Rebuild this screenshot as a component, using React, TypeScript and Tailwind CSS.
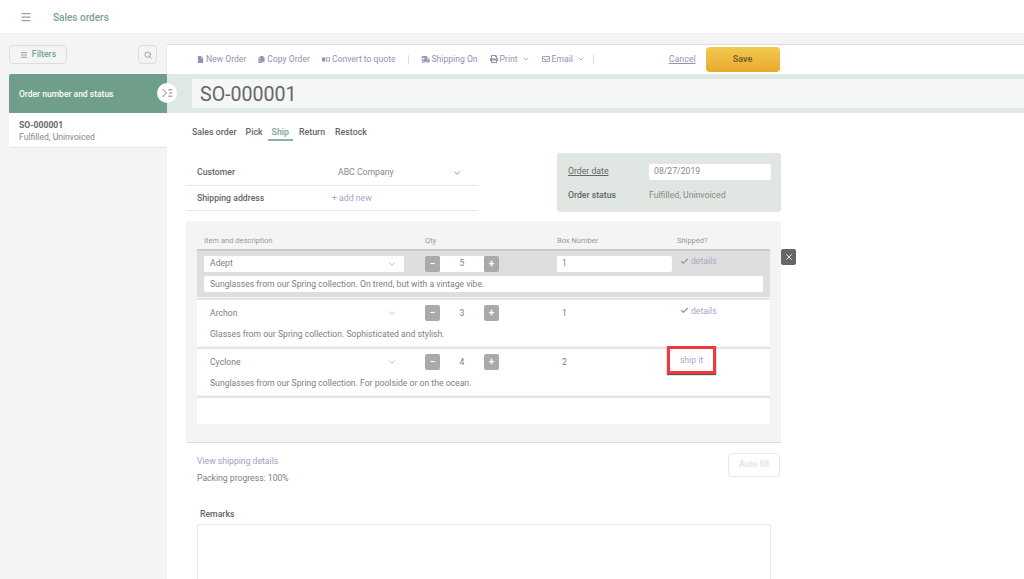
import { Check, ChevronDown, Menu, Search, X } from 'lucide-react';
import { FaCopy, FaFile, FaPrint, FaRegEnvelope, FaShippingFast } from 'react-icons/fa';

const ITEMS = [
  { name: 'Adept', qty: '5', box: '1', desc: 'Sunglasses from our Spring collection. On trend, but with a vintage vibe.', shipped: true, active: true },
  { name: 'Archon', qty: '3', box: '1', desc: 'Glasses from our Spring collection. Sophisticated and stylish.', shipped: true, active: false },
  { name: 'Cyclone', qty: '4', box: '2', desc: 'Sunglasses from our Spring collection. For poolside or on the ocean.', shipped: false, active: false },
];

function ToolButton({ icon, label, caret }: { icon: React.ReactNode; label: string; caret?: boolean }) {
  return (
    <span className="flex items-center gap-[2px] text-[#8f93ad]">
      {icon}
      <span className="text-[8.6px]">{label}</span>
      {caret && <ChevronDown className="ml-[2px] h-[8px] w-[8px]" />}
    </span>
  );
}

function QtyButton({ label }: { label: string }) {
  return (
    <span className="flex h-[16px] w-[15px] shrink-0 items-center justify-center rounded-[2px] bg-[#aaaaaa] text-[10px] font-bold leading-none text-white">
      {label}
    </span>
  );
}

function ItemRow({ item }: { item: (typeof ITEMS)[number] }) {
  return (
    <div className={`relative h-[48px] border-t-2 pl-[7px] ${item.active ? 'border-[#c9c9c9] bg-[#dedede]' : 'border-[#e4e4e4] bg-white'}`}>
      <div className={`flex items-center text-[8.65px] text-[#808080] ${item.active ? 'h-[25px]' : 'h-[26px]'}`}>
        <div className={`flex h-[16px] w-[200px] items-center justify-between rounded-[2px] pl-[6px] pr-[7px] ${item.active ? 'bg-white' : ''}`}>
          <span>{item.name}</span>
          <ChevronDown className="h-[10px] w-[10px] text-[#999]" strokeWidth={1.5} />
        </div>
        <div className="ml-[21px] flex w-[74px] items-center">
          <QtyButton label="−" />
          <span className={`flex h-[16px] w-[44px] items-center justify-center ${item.active ? 'bg-white' : ''}`}>{item.qty}</span>
          <QtyButton label="+" />
        </div>
        <div className={`ml-[58px] flex h-[16px] w-[115px] items-center rounded-[2px] pl-[5px] ${item.active ? 'bg-white' : ''}`}>{item.box}</div>
        {item.shipped ? (
          <span className="ml-[8px] -mt-[4px] flex items-center gap-[2px] text-[#a3a8c4]">
            <Check className="h-[9px] w-[9px] text-[#78a48e]" strokeWidth={3} />
            details
          </span>
        ) : (
          <span className="relative ml-[-5px] -mt-[3px] flex h-[28px] w-[49px] items-center justify-center self-start border-[3px] border-[#ee3b3b] bg-white text-[#a3a8c4] shadow-[0_1px_1px_#555]">
            ship it
          </span>
        )}
      </div>
      <div className={`flex h-[16px] w-[559px] items-center rounded-[2px] pl-[6px] text-[8.65px] text-[#808080] ${item.active ? 'bg-white' : ''}`}>{item.desc}</div>
    </div>
  );
}

export default function App() {
  return (
    <div className="flex h-[579px] w-[1024px] flex-col overflow-hidden bg-[#f4f4f4] font-['Roboto',sans-serif]">
      {/* Top bar */}
      <header className="flex h-[34px] shrink-0 items-center border-b border-[#eeeeee] bg-white pl-[20px]">
        <Menu className="h-[12px] w-[12px] text-[#9a9cb8]" strokeWidth={2.5} />
        <span className="ml-[21px] pt-[1px] text-[10px] font-medium text-[#78a48e]">Sales orders</span>
      </header>

      <div className="flex min-h-0 flex-1">
        {/* Order list */}
        <aside className="w-[167px] shrink-0 pl-[9px]">
          <div className="flex h-[40px] items-end justify-between pb-[10px] pr-[10px]">
            <button className="flex h-[19px] w-[58px] items-center justify-center gap-[4px] rounded-[4px] border border-[#dddddd] text-[8.7px] font-medium text-[#78a48e]">
              <Menu className="h-[8px] w-[8px] text-[#777]" />
              Filters
            </button>
            <button className="flex h-[19px] w-[19px] items-center justify-center rounded-[4px] border border-[#dddddd]">
              <Search className="h-[8px] w-[8px] text-[#777]" />
            </button>
          </div>
          <div className="flex h-[39px] items-center rounded-tl-[2px] bg-[#6f9e8a] pl-[10px] pt-[1px] text-[8.5px] font-medium text-white">
            Order number and status
          </div>
          <div className="h-[35px] border-b border-[#e4e4e4] bg-white pl-[10px] pt-[6px] text-[8.6px] leading-[12px]">
            <div className="font-bold text-[#666]">SO-000001</div>
            <div className="text-[#888]">Fulfilled, Uninvoiced</div>
          </div>
        </aside>

        {/* Order detail */}
        <main className="relative mt-[10px] min-w-0 flex-1 bg-white">
          <div className="flex h-[30px] items-center border-t border-[#dddddd] pl-[30px] shadow-[0_1px_2px_#d5ddd8]">
            <div className="flex items-center gap-[12px]">
              <ToolButton icon={<FaFile className="h-[7px] w-[7px]" />} label="New Order" />
              <ToolButton icon={<FaCopy className="h-[7px] w-[7px]" />} label="Copy Order" />
              <ToolButton
                icon={
                  <svg viewBox="0 0 10 7" className="h-[7px] w-[8px]" fill="currentColor">
                    <rect x="0" y="1" width="4" height="5" />
                    <rect x="5.5" y="1.5" width="4" height="4" fill="none" stroke="currentColor" />
                  </svg>
                }
                label="Convert to quote"
              />
              <span className="h-[9px] w-px bg-[#dddddd]" />
              <ToolButton icon={<FaShippingFast className="h-[9px] w-[9px]" />} label="Shipping On" />
              <ToolButton icon={<FaPrint className="h-[8px] w-[8px]" />} label="Print" caret />
              <ToolButton icon={<FaRegEnvelope className="h-[8px] w-[8px]" />} label="Email" caret />
              <span className="-ml-[4px] h-[9px] w-px bg-[#dddddd]" />
            </div>
            <span className="ml-[75px] text-[8.8px] text-[#8f93ad] underline">Cancel</span>
            <button className="ml-[10px] h-[25px] w-[74px] rounded-[4px] bg-gradient-to-b from-[#f3c94f] to-[#e8a92c] text-[9px] font-bold text-[#7a6430]">
              Save
            </button>
          </div>

          <div className="flex h-[39px] items-center bg-[#e0e8e3] pl-[25px]">
            <div className="flex h-[29px] flex-1 items-center rounded-l-[2px] bg-[#f4f7f6] pl-[8px] pt-[2px] text-[19.6px] text-[#666]">SO-000001</div>
          </div>

          {/* Collapse toggle */}
          <span className="absolute left-[-10px] top-[39px] flex h-[20px] w-[20px] items-center justify-center rounded-full bg-white text-[11px] text-[#777]">
            <svg viewBox="0 0 14 12" className="h-[10px] w-[11px]" fill="none" stroke="currentColor" strokeWidth="1.2">
              <path d="M1 1l4.5 5L1 11M8 2h5M9 6h4M8 10h5" />
            </svg>
          </span>

          {/* Tabs */}
          <nav className="ml-[25px] mt-[13px] flex h-[15px] items-start gap-[9px] text-[8.8px] font-medium text-[#666]">
            <span>Sales order</span>
            <span>Pick</span>
            <span className="-mx-[4px] h-[15px] border-b-2 border-[#8ab39f] px-[4px] text-[#78a48e]">Ship</span>
            <span className="ml-[1px]">Return</span>
            <span className="ml-[1px]">Restock</span>
          </nav>

          {/* Customer and order info */}
          <div className="ml-[19px] mt-[12px] flex h-[68px] w-[595px] justify-between">
            <div className="mt-[8px] w-[292px] text-[8.7px]">
              <div className="flex h-[25px] items-center border-b border-[#e8e8e8] pl-[11px] pr-[16px]">
                <span className="w-[141px] font-medium text-[#666]">Customer</span>
                <span className="flex-1 text-[#888]">ABC Company</span>
                <ChevronDown className="h-[10px] w-[10px] text-[#888]" />
              </div>
              <div className="flex h-[25px] items-center border-b border-[#e8e8e8] pl-[11px] pt-[1px]">
                <span className="w-[135px] font-medium text-[#666]">Shipping address</span>
                <span className="text-[#a3a8c4]">+ add new</span>
              </div>
            </div>
            <div className="h-[58px] w-[224px] rounded-[3px] bg-[#e0e6e2] pl-[11px] text-[8.7px] shadow-[0_1px_1px_#e5e5e5]">
              <div className="flex h-[36px] items-center pt-[1px]">
                <span className="w-[81px] text-[#666] underline">Order date</span>
                <span className="flex h-[16px] w-[122px] items-center rounded-[2px] bg-white pl-[5px] text-[#888]">08/27/2019</span>
              </div>
              <div className="mt-[1px] flex h-[12px] items-center">
                <span className="w-[81px] font-medium text-[#666]">Order status</span>
                <span className="text-[#888]">Fulfilled, Uninvoiced</span>
              </div>
            </div>
          </div>

          {/* Items table */}
          <div className="relative ml-[19px] h-[222px] w-[595px] rounded-t-[3px] border-b border-[#dddddd] bg-[#f4f4f4] px-[11px]">
            <div className="flex h-[28px] items-end pb-[3px] pl-[7px] text-[7.5px] text-[#999]">
              <span className="w-[221px]">Item and description</span>
              <span className="w-[132px]">Qty</span>
              <span className="w-[120px]">Box Number</span>
              <span>Shipped?</span>
            </div>
            <div className="flex flex-col gap-px">
              {ITEMS.map((item) => (
                <ItemRow key={item.name} item={item} />
              ))}
              <div className="h-[28px] border-t-2 border-[#e4e4e4] bg-white" />
            </div>
            <span className="absolute left-[595px] top-[28px] flex h-[16px] w-[15px] items-center justify-center rounded-[2px] bg-[#666] text-white">
              <X className="h-[10px] w-[10px]" />
            </span>
          </div>

          {/* Shipping summary */}
          <div className="ml-[30px] mt-[10px] flex h-[34px] w-[583px] justify-between text-[8.65px]">
            <div className="leading-[17px]">
              <div className="text-[#9ca2c2]">View shipping details</div>
              <div className="text-[#808080]">Packing progress: 100%</div>
            </div>
            <button className="h-[24px] w-[52px] rounded-[4px] border border-[#e8e8f0] text-[8.7px] font-medium text-[#e0e0ea]">
              Auto fill
            </button>
          </div>

          {/* Remarks */}
          <div className="ml-[30px] mt-[21px] w-[574px]">
            <div className="pl-[3px] text-[8.7px] font-medium leading-[12px] text-[#666]">Remarks</div>
            <div className="mt-[4px] h-[60px] rounded-t-[2px] border border-[#e8e8f0]" />
          </div>
        </main>
      </div>
    </div>
  );
}
